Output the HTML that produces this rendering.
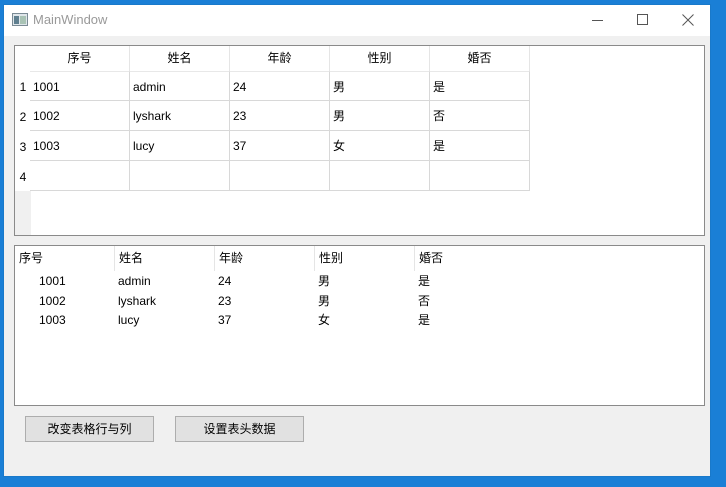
<!DOCTYPE html>
<html><head><meta charset="utf-8"><style>
*{margin:0;padding:0;box-sizing:border-box}
body{width:726px;height:487px;overflow:hidden;background:#1a7fd6;font-family:"Liberation Sans","Noto Sans CJK SC",sans-serif;font-size:12px;color:#000;position:relative}
.win{position:absolute;left:3px;top:4px;width:708px;height:473px;background:#f0f0f0;border:1px solid #1979ca}
.title{position:absolute;left:0;top:0;width:100%;height:31px;background:#fff}
.title .t{position:absolute;left:29px;top:7px;color:#999;font-size:13px}
.abs{position:absolute}
.frame{position:absolute;background:#fff;border:1px solid #8a8a8a}
.cell{position:absolute;height:30px;line-height:30px;padding-left:3px;border-right:1px solid #d8d8d8;border-bottom:1px solid #d8d8d8}
.btn{position:absolute;height:26px;background:#e1e1e1;border:1px solid #adadad;text-align:center;line-height:24px;font-size:12px}
</style></head><body>
<div class="win">
 <div class="title">
  <svg class="abs" style="left:8px;top:8px" width="16" height="14"><rect x="0.5" y="0.5" width="15" height="12" fill="#dfe6ea" stroke="#7a8a94"/><rect x="2" y="3" width="5" height="8" fill="#5f7f8f"/><rect x="8" y="3" width="6" height="8" fill="#a9c3b5"/></svg>
  <div class="t">MainWindow</div>
  <div class="abs" style="left:588px;top:15px;width:11px;height:1px;background:#555"></div>
  <div class="abs" style="left:633px;top:9px;width:11px;height:11px;border:1px solid #555"></div>
  <svg class="abs" style="left:678px;top:9px" width="12" height="12"><path d="M0.5 0.5L11.5 11.5M11.5 0.5L0.5 11.5" stroke="#555" stroke-width="1"/></svg>
 </div>
</div>
<div class="frame" style="left:14px;top:45px;width:691px;height:191px">
 <div class="abs" style="left:0;top:0;width:16px;height:189px;background:#f0f0f0"></div>
 <div class="abs" style="left:0;top:0;width:16px;height:145px;background:#fff"></div>
 <div id="t1"></div>
</div>
<div class="frame" style="left:14px;top:245px;width:691px;height:161px" id="t2"></div>
<div class="btn" style="left:25px;top:416px;width:129px">改变表格行与列</div>
<div class="btn" style="left:175px;top:416px;width:129px">设置表头数据</div>
<script>
var h=["序号","姓名","年龄","性别","婚否"],d=[["1001","admin","24","男","是"],["1002","lyshark","23","男","否"],["1003","lucy","37","女","是"],["","","","",""]];
var s="";
for(var c=0;c<5;c++)s+='<div class="abs" style="left:'+(15+c*100)+'px;top:0;width:100px;height:25px;line-height:24px;text-align:center;border-right:1px solid #e5e5e5">'+h[c]+'</div>';
for(var r=0;r<4;r++){s+='<div class="abs" style="left:0;top:'+(25+r*30)+'px;width:16px;height:30px;line-height:32px;text-align:center">'+(r+1)+'</div>';
for(c=0;c<5;c++)s+='<div class="cell" style="left:'+(15+c*100)+'px;top:'+(25+r*30)+'px;width:100px;border-top:'+(r==0?'1px solid #e8e8e8':'0')+'">'+d[r][c]+'</div>';}
document.getElementById('t1').innerHTML=s;
s="";
for(c=0;c<5;c++)s+='<div class="abs" style="left:'+(c*100)+'px;top:0;width:100px;height:25px;line-height:24px;padding-left:4px;border-right:'+(c<4?'1px solid #e5e5e5':'0')+'">'+h[c]+'</div>';
for(r=0;r<3;r++)for(c=0;c<5;c++)s+='<div class="abs" style="left:'+(c*100+(c==0?24:3))+'px;top:'+(26+r*19.5)+'px;line-height:18px">'+d[r][c]+'</div>';
document.getElementById('t2').innerHTML=s;
</script>
</body></html>
